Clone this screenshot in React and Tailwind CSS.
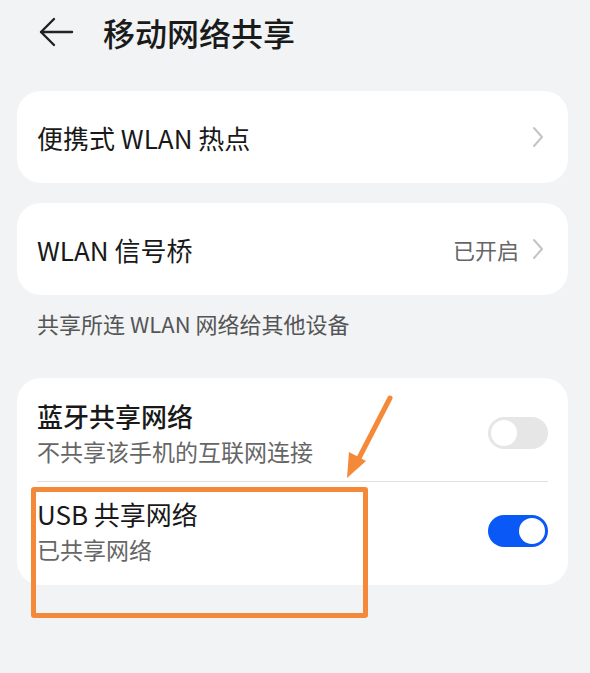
import React from 'react';

const font = { fontFamily: '"Noto Sans CJK SC", "Noto Sans", sans-serif' };

const Chevron = () => (
    <svg width="14" height="22" viewBox="0 0 14 22" fill="none">
        <path d="M3 2l8 9-8 9" stroke="#c4c4c4" strokeWidth="2" strokeLinecap="round" strokeLinejoin="round" />
    </svg>
);

const Toggle = ({ on }) => (
    <div
        className={`w-[60px] h-[32px] rounded-full flex items-center px-[3px] ${
            on ? 'bg-[#0a59f7] justify-end' : 'bg-[#e6e6e6] justify-start'
        }`}
    >
        <div className="w-[26px] h-[26px] rounded-full bg-white" />
    </div>
);

const LinkRow = ({ label, value }) => (
    <div className="bg-white rounded-[24px] h-[92px] px-5 flex items-center justify-between">
        <span className="text-[26px] text-[#191919]">{label}</span>
        <div className="flex items-center gap-3 pr-[3px]">
            {value && <span className="text-[22px] text-[#666]">{value}</span>}
            <Chevron />
        </div>
    </div>
);

const SwitchRow = ({ title, sub, on, bold, cls }) => (
    <div className={`flex items-center justify-between h-[103px] ${cls}`}>
        <div className="flex flex-col">
            <span className={`text-[26px] text-[#191919] leading-[36px] ${bold ? 'font-medium' : ''}`}>{title}</span>
            <span className="text-[23px] text-[#666] leading-[32px] mt-px">{sub}</span>
        </div>
        <Toggle on={on} />
    </div>
);

export default function App() {
    return (
        <div className="relative w-[590px] h-[673px] bg-[#f1f3f5] overflow-hidden" style={font}>
            <div className="flex items-center h-[64px] pl-[38px]">
                <svg width="36" height="30" viewBox="0 0 36 30" fill="none">
                    <path d="M34 15H3M16 2L3 15l13 13" stroke="#222" strokeWidth="2.4" strokeLinecap="round" strokeLinejoin="round" />
                </svg>
                <h1 className="ml-[29px] text-[32px] font-medium text-[#1a1a1a]">移动网络共享</h1>
            </div>

            <div className="px-[17px] pt-[27px] pr-[22px] flex flex-col gap-[20px]">
                <LinkRow label="便携式 WLAN 热点" />
                <LinkRow label="WLAN 信号桥" value="已开启" />
            </div>

            <p className="px-[37px] mt-[12px] text-[22px] text-[#555]">共享所连 WLAN 网络给其他设备</p>

            <div className="mx-[17px] mr-[22px] mt-[38px] bg-white rounded-[24px] px-5">
                <SwitchRow title="蓝牙共享网络" sub="不共享该手机的互联网连接" on={false} bold cls="pt-[6px]" />
                <div className="h-px bg-[#e0e0e0]" />
                <SwitchRow title="USB 共享网络" sub="已共享网络" on cls="pb-[6px]" />
            </div>

            {/* annotation overlay */}
            <div className="absolute left-[31px] top-[487px] w-[337px] h-[131px] border-[5px] border-[#f5893a] rounded-[3px]" />
            <svg className="absolute left-0 top-0" width="590" height="673" viewBox="0 0 590 673" fill="none">
                <path d="M390 398L358 460" stroke="#f5893a" strokeWidth="5" strokeLinecap="round" />
                <path d="M347 478l2-26 17 9z" fill="#f5893a" />
            </svg>
        </div>
    );
}
